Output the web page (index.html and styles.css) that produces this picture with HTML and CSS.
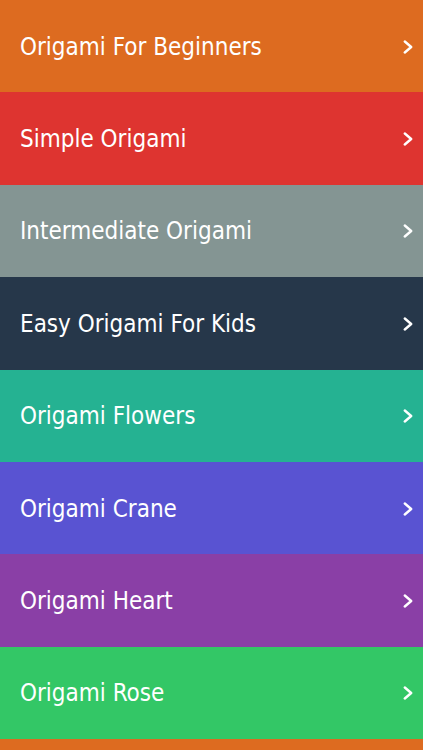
FILE: index.html
```html
<!DOCTYPE html>
<html lang="en">
<head>
    <meta charset="UTF-8">
    <meta name="viewport" content="width=device-width, initial-scale=1.0">
    <title>Origami</title>
    <link rel="stylesheet" href="styles.css">
</head>
<body>
    <ul class="menu">
        <li class="menu-item orange"><span class="item-title">Origami For Beginners</span><svg class="chevron" viewBox="0 0 10 14"><path d="M1.8 1.5 L8.2 7 L1.8 12.5"/></svg></li>
        <li class="menu-item red"><span class="item-title">Simple Origami</span><svg class="chevron" viewBox="0 0 10 14"><path d="M1.8 1.5 L8.2 7 L1.8 12.5"/></svg></li>
        <li class="menu-item gray"><span class="item-title">Intermediate Origami</span><svg class="chevron" viewBox="0 0 10 14"><path d="M1.8 1.5 L8.2 7 L1.8 12.5"/></svg></li>
        <li class="menu-item navy"><span class="item-title">Easy Origami For Kids</span><svg class="chevron" viewBox="0 0 10 14"><path d="M1.8 1.5 L8.2 7 L1.8 12.5"/></svg></li>
        <li class="menu-item teal"><span class="item-title">Origami Flowers</span><svg class="chevron" viewBox="0 0 10 14"><path d="M1.8 1.5 L8.2 7 L1.8 12.5"/></svg></li>
        <li class="menu-item blue"><span class="item-title">Origami Crane</span><svg class="chevron" viewBox="0 0 10 14"><path d="M1.8 1.5 L8.2 7 L1.8 12.5"/></svg></li>
        <li class="menu-item purple"><span class="item-title">Origami Heart</span><svg class="chevron" viewBox="0 0 10 14"><path d="M1.8 1.5 L8.2 7 L1.8 12.5"/></svg></li>
        <li class="menu-item green"><span class="item-title">Origami Rose</span><svg class="chevron" viewBox="0 0 10 14"><path d="M1.8 1.5 L8.2 7 L1.8 12.5"/></svg></li>
    </ul>
</body>
</html>
```

FILE: styles.css
```css
html, body {
    height: 100%;
}
body {
    margin: 0;
    background: #dd6b20;
    font-family: "DejaVu Sans Condensed", "DejaVu Sans", sans-serif;
    overflow: hidden;
}
.menu {
    list-style: none;
    margin: 0;
    padding: 0;
}
.menu-item {
    height: 92.375px;
    box-sizing: border-box;
    padding: 1px 10px 0 20px;
    display: flex;
    align-items: center;
    justify-content: space-between;
    color: #fff;
}
.item-title {
    font-size: 24px;
}
.chevron {
    width: 10px;
    height: 14px;
    fill: none;
    stroke: #fff;
    stroke-width: 2.4;
    stroke-linecap: round;
    stroke-linejoin: round;
}
.orange { background: #dd6b20; }
.red { background: #de3430; }
.gray { background: #849593; }
.navy { background: #26374a; }
.teal { background: #25b292; }
.blue { background: #5953d2; }
.purple { background: #8a3fa6; }
.green { background: #33c766; }
```
